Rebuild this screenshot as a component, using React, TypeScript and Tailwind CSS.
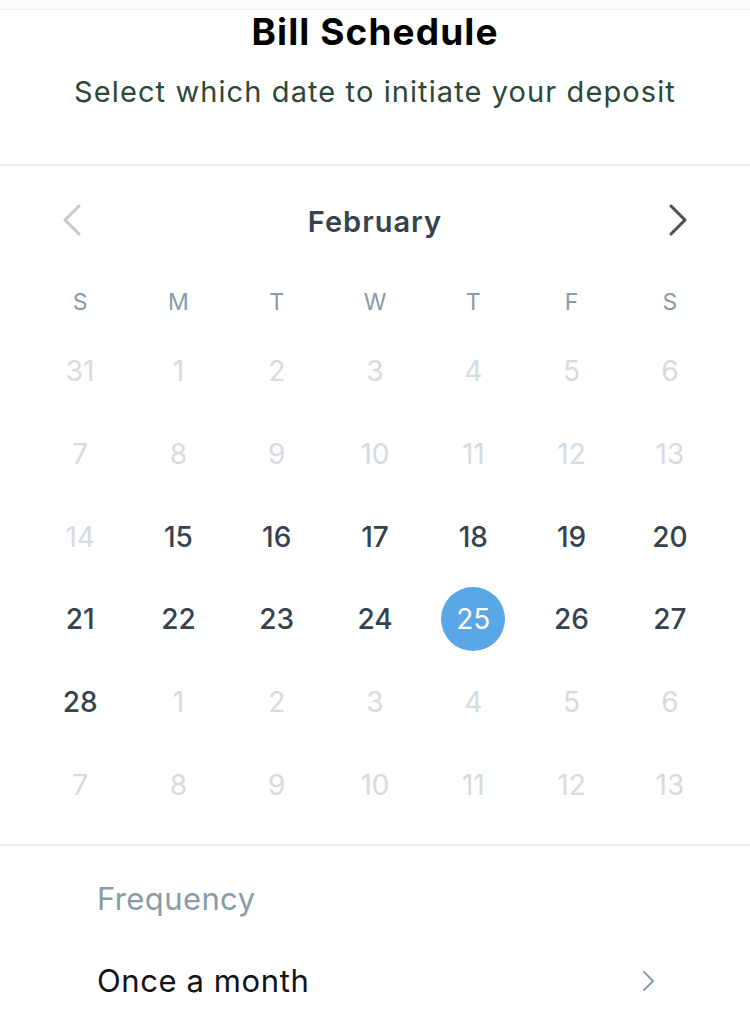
import React from "react";

const weekdays = ["S", "M", "T", "W", "T", "F", "S"];

type Day = { n: number; active: boolean };

const rows: Day[][] = [
  [31, 1, 2, 3, 4, 5, 6].map((n) => ({ n, active: false })),
  [7, 8, 9, 10, 11, 12, 13].map((n) => ({ n, active: false })),
  [14, 15, 16, 17, 18, 19, 20].map((n, i) => ({ n, active: i > 0 })),
  [21, 22, 23, 24, 25, 26, 27].map((n) => ({ n, active: true })),
  [28, 1, 2, 3, 4, 5, 6].map((n, i) => ({ n, active: i === 0 })),
  [7, 8, 9, 10, 11, 12, 13].map((n) => ({ n, active: false })),
];

function Chevron({ dir, className }: { dir: "left" | "right"; className: string }) {
  return (
    <svg viewBox="0 0 20 32" className={className} fill="none" stroke="currentColor" strokeWidth="3" strokeLinecap="round" strokeLinejoin="round">
      {dir === "left" ? <path d="M17 2 L3 16 L17 30" /> : <path d="M3 2 L17 16 L3 30" />}
    </svg>
  );
}

export default function App() {
  return (
    <div className="w-[750px] h-[1013px] bg-white overflow-hidden" style={{ fontFamily: "Inter, 'Noto Sans', sans-serif" }}>
      <div className="h-[10px] bg-[#fbfbfb] border-b border-[#f3f3f3]" />
      <div className="h-[156px] flex flex-col items-center border-b-2 border-[#ececec]">
        <h1 className="mt-[0px] text-[37px] leading-[44px] font-bold text-black tracking-[1.1px]">Bill Schedule</h1>
        <p className="mt-[20px] text-[29px] leading-[36px] text-[#2c4838] tracking-[1.1px]">Select which date to initiate your deposit</p>
      </div>
      <div className="h-[680px] px-[31px] border-b-2 border-[#ececec]">
        <div className="h-[108px] flex items-center justify-between px-[31px]">
          <Chevron dir="left" className="w-[20px] h-[32px] text-[#c9c9c9]" />
          <span className="mt-[4px] text-[29px] font-semibold text-[#36434f] tracking-[1px]">February</span>
          <Chevron dir="right" className="w-[20px] h-[32px] text-[#4d4d4d]" />
        </div>
        <div className="grid grid-cols-7 h-[56px] items-center">
          {weekdays.map((d, i) => (
            <div key={i} className="text-center text-[23px] text-[#8a9ba8]">{d}</div>
          ))}
        </div>
        <div className="flex flex-col">
          {rows.map((row, ri) => (
            <div key={ri} className="grid grid-cols-7 h-[82.7px] items-center">
              {row.map((d, ci) => {
                const selected = ri === 3 && ci === 4;
                return (
                  <div key={ci} className="flex justify-center">
                    {selected ? (
                      <div className="w-[64px] h-[64px] rounded-full bg-[#5aa7e8] flex items-center justify-center text-white text-[28px]">
                        {d.n}
                      </div>
                    ) : (
                      <span className={`text-[28px] ${d.active ? "text-[#36434f] font-medium" : "text-[#d6dae1]"}`}>{d.n}</span>
                    )}
                  </div>
                );
              })}
            </div>
          ))}
        </div>
      </div>
      <div className="px-[97px] pr-[95px]">
        <div className="mt-[33px] text-[31px] leading-[40px] text-[#8a9ba8] tracking-[0.4px]">Frequency</div>
        <div className="mt-[42px] flex items-center justify-between">
          <span className="text-[31px] leading-[40px] text-[#111318] tracking-[0.6px]">Once a month</span>
          <Chevron dir="right" className="w-[13px] h-[22px] text-[#8a9ba8]" />
        </div>
      </div>
    </div>
  );
}
